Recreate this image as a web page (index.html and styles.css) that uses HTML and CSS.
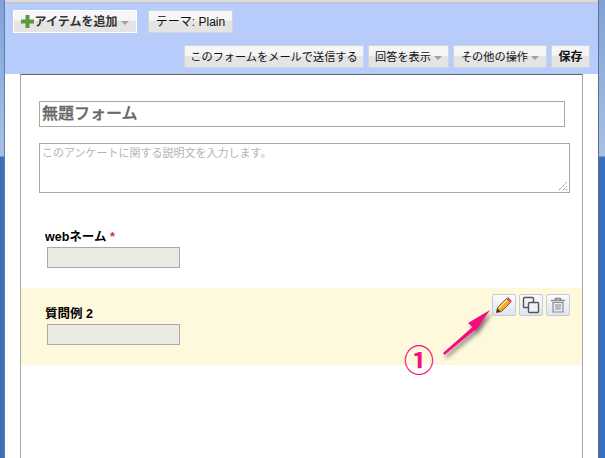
FILE: index.html
```html
<!DOCTYPE html>
<html lang="ja">
<head>
<meta charset="utf-8">
<title>無題フォーム</title>
<link rel="stylesheet" href="styles.css">
</head>
<body>
<div class="window">
  <div class="edge edge-left"></div>
  <main class="main">
    <div class="topline"></div>
    <header class="toolbar">
      <div class="row row-one">
        <button class="btn btn-add">
          <svg class="plus" width="13" height="13" viewBox="0 0 13 13"><path d="M4.500 0h4v4.500h4.500v4h-4.500v4.500h-4v-4.500h-4.500v-4h4.500z" fill="#5c9a3c"/></svg>
          <b>アイテムを追加</b><i class="caret"></i>
        </button>
        <button class="btn btn-theme">テーマ: Plain</button>
      </div>
      <div class="row row-two">
        <button class="btn btn-send">このフォームをメールで送信する</button>
        <button class="btn btn-view">回答を表示<i class="caret"></i></button>
        <button class="btn btn-more">その他の操作<i class="caret"></i></button>
        <button class="btn btn-save"><b>保存</b></button>
      </div>
    </header>
    <section class="form">
      <div class="title-box">無題フォーム</div>
      <div class="desc-box">このアンケートに関する説明文を入力します。
        <svg class="grip" width="9" height="9" viewBox="0 0 9 9"><path d="M0 8L8 0M4 8L8 4M7 8L8 7" stroke="#666" stroke-width="1" stroke-dasharray="1 1" fill="none"/></svg>
      </div>
      <div class="question q-one">
        <div class="q-label"><b>webネーム</b> <span class="req">*</span></div>
        <div class="q-input"></div>
      </div>
      <div class="question q-two">
        <div class="q-label"><b>質問例 2</b></div>
        <div class="q-input"></div>
        <div class="tools">
          <button class="tool">
            <svg width="18" height="18" viewBox="0 0 18 18"><path d="M1.500 16.500L2.500 11.500L11.500 2.500L15.500 6.500L6.500 15.500z" fill="#f0a92c" stroke="#9a5a18" stroke-width="1"/><path d="M11.500 2.500L13 1L17 5L15.500 6.500z" fill="#e4525a"/><path d="M1.500 16.500L2.500 12.500L5.500 15.500z" fill="#3a3020"/><path d="M4 12L12 4" stroke="#fde49a" stroke-width="1.200"/></svg>
          </button>
          <button class="tool">
            <svg width="18" height="18" viewBox="0 0 18 18"><rect x="1.500" y="1.500" width="10" height="10" rx="1" fill="none" stroke="#555" stroke-width="1.400"/><rect x="6.500" y="6.500" width="10" height="10" rx="1" fill="#eef2fa" stroke="#555" stroke-width="1.400"/></svg>
          </button>
          <button class="tool">
            <svg width="16" height="16" viewBox="0 0 16 16"><path d="M1 3.500h14M5.500 3V1.500h5V3" stroke="#8a8a8a" stroke-width="1.400" fill="none"/><path d="M3 5.500h10v9.500H3z" fill="#ececec" stroke="#8a8a8a" stroke-width="1.200"/><path d="M6 7v6M8 7v6M10 7v6" stroke="#8a8a8a" stroke-width="1"/></svg>
          </button>
        </div>
      </div>
    </section>
  </main>
  <div class="edge edge-right"></div>
  <svg class="arrow" width="60" height="60" viewBox="0 0 60 60">
    <defs><filter id="sh" x="-30%" y="-30%" width="170%" height="170%"><feDropShadow dx="2" dy="3" stdDeviation="2" flood-color="#000" flood-opacity="0.55"/></filter></defs>
    <path d="M2 48L31.500 22L27 18L49 5L34 27L34.500 24.500L3.500 50z" fill="#f5107f" filter="url(#sh)"/>
  </svg>
  <span class="marker">①</span>
</div>
</body>
</html>
```
FILE: styles.css
```css
* { box-sizing: border-box; }
html, body { margin: 0; padding: 0; }
body { width: 605px; height: 458px; overflow: hidden; background: #fff; font-family: "Liberation Sans", "Noto Sans CJK JP", sans-serif; color: #111; }
.window { position: relative; display: flex; width: 605px; height: 458px; }
.edge { flex: none; background: linear-gradient(to bottom, #7fa3d6 0, #a9c0e4 156px, #3c6fb9 157px, #3c6fb9 100%); }
.edge-left { width: 5px; border-right: 1px solid #5a7fb4; }
.edge-right { width: 7px; border-left: 1px solid #5d6f8c; }
.main { flex: 1; min-width: 0; display: flex; flex-direction: column; }
.topline { height: 3px; background: #dcdcdc; border-bottom: 1px solid #c4c4c4; }
.toolbar { height: 71px; background: #b8ccfb; padding: 7px 8px 0; display: flex; flex-direction: column; gap: 12px; }
.row { display: flex; }
.row-one { gap: 11px; }
.row-two { gap: 4px; justify-content: flex-end; }
.btn { height: 23px; padding: 0; border: 1px solid #d0d4dc; font: 11.200px/20px "Liberation Sans", "Noto Sans CJK JP", sans-serif; color: #111; background: linear-gradient(to bottom, #f6f6f6 0, #f6f6f6 45%, #e4e4e4 46%, #e4e4e4 100%); display: flex; align-items: center; justify-content: center; white-space: nowrap; }
.btn b { font-weight: 700; }
.btn-add { width: 124px; border: 1px solid #fff; gap: 1px; color: #333; font-size: 12px; }
.btn-theme { width: 85px; font-size: 12px; }
.btn-send { width: 180px; }
.btn-view { width: 81px; }
.btn-more { width: 94px; }
.btn-save { width: 39px; font-size: 12px; }
.plus { flex: none; }
.caret { display: inline-block; width: 0; height: 0; margin: 2px 0 0 3px; border: 4px solid transparent; border-top: 4px solid #a0a0a0; border-bottom: 0; }
.form { flex: 1; margin-left: 15px; width: 563px; border: 1px solid #a8a8a8; border-top-color: #666; border-bottom: 0; background: #fff; padding: 26px 0 0; display: flex; flex-direction: column; }
.title-box { margin-left: 18px; width: 526px; height: 26px; border: 1px solid #a8a8a8; padding-left: 2px; font-size: 16px; line-height: 23px; font-weight: 500; color: #666; -webkit-text-stroke: 0.3px #666; }
.desc-box { position: relative; margin: 16px 0 0 18px; width: 531px; height: 50px; border: 1px solid #a8a8a8; padding: 1px 2px 0; font-size: 11px; line-height: 17px; color: #b4b4b4; }
.grip { position: absolute; right: 1px; bottom: 1px; }
.question { padding-left: 24px; }
.q-one { margin-top: 33px; height: 62px; }
.q-two { position: relative; height: 77px; background: #fef8dc; padding-top: 15px; }
.q-label { height: 21px; padding-top: 1px; font-size: 12.500px; line-height: 20px; color: #000; }
.q-label b { font-weight: 700; }
.req { color: #d33; font-weight: 700; }
.q-input { margin-left: 2px; width: 133px; height: 21px; background: #ebeae3; border: 1px solid #aaa; }
.tools { position: absolute; top: 6px; right: 12px; display: flex; gap: 3px; }
.tool { width: 24px; height: 22px; padding: 0; border: 1px solid #c4ccd8; border-radius: 2px; background: linear-gradient(to bottom, #fafbfd, #dfe5f0); display: flex; align-items: center; justify-content: center; }
.arrow { position: absolute; left: 441px; top: 305px; }
.marker { position: absolute; left: 403px; top: 340px; width: 32px; height: 36px; font: 700 30px/36px "Noto Sans CJK JP", sans-serif; color: #f5107f; text-align: center; }
```
